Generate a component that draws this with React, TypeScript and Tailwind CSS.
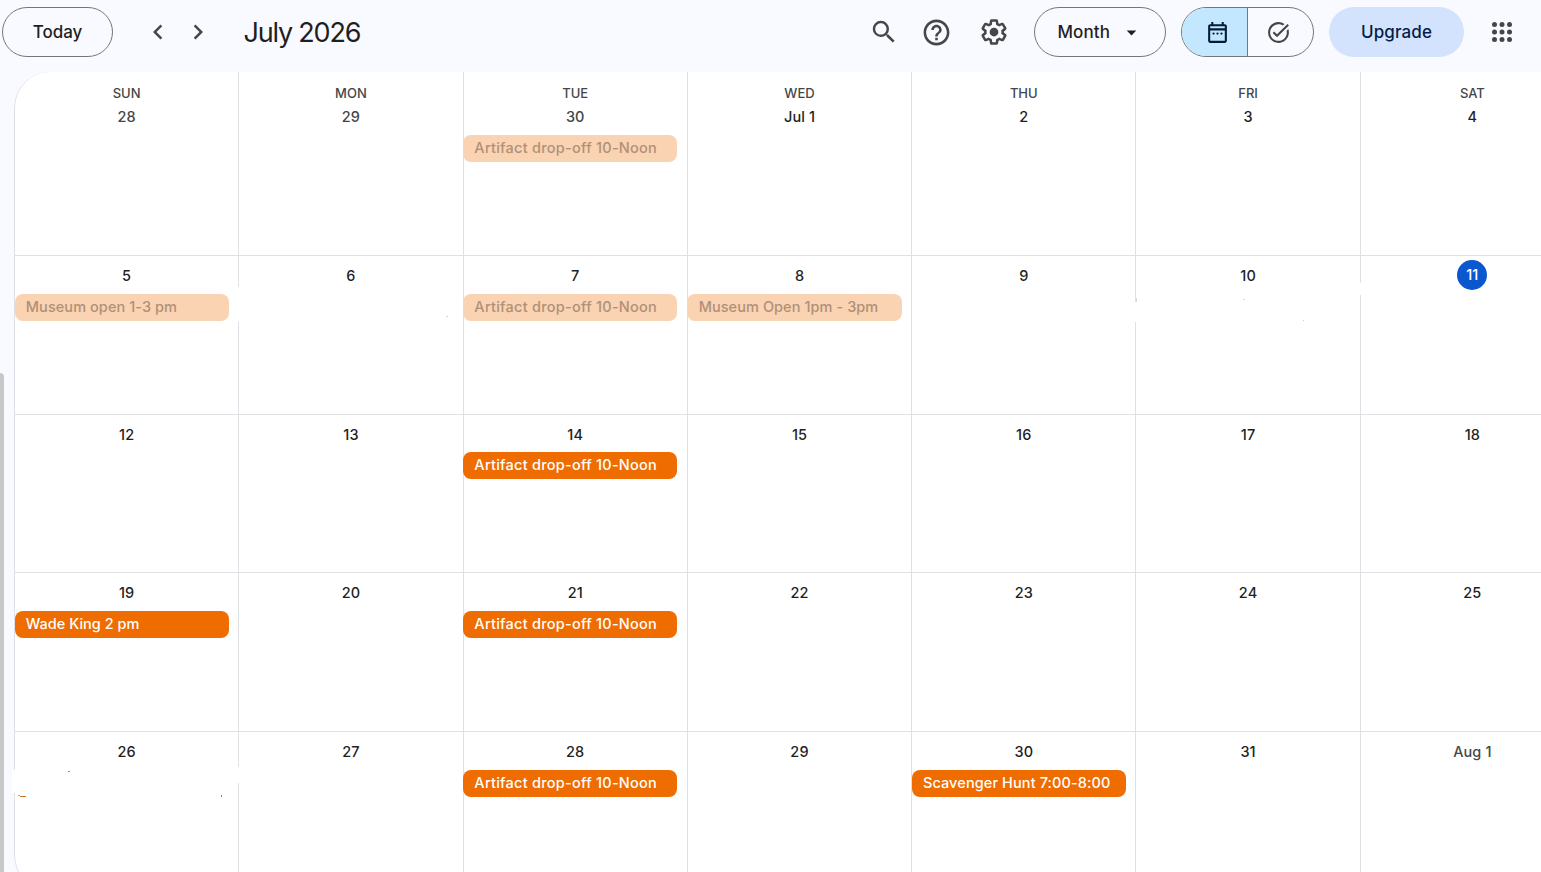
import clsx from 'clsx'
import { MdArrowDropDown, MdChevronLeft, MdChevronRight, MdHelpOutline, MdSearch, MdTaskAlt } from 'react-icons/md'

type CalendarEvent = { title: string; past?: boolean; tracking?: string }
type Day = { label: string; muted?: boolean; today?: boolean; event?: CalendarEvent }

const weekdays = ['SUN', 'MON', 'TUE', 'WED', 'THU', 'FRI', 'SAT']

const dropOff = { title: 'Artifact drop-off 10-Noon', tracking: 'tracking-[0.25px]' }

const days: Day[] = [
  { label: '28', muted: true },
  { label: '29', muted: true },
  { label: '30', muted: true, event: { ...dropOff, past: true } },
  { label: 'Jul 1' },
  { label: '2' },
  { label: '3' },
  { label: '4' },
  { label: '5', event: { title: 'Museum open 1-3 pm', past: true } },
  { label: '6' },
  { label: '7', event: { ...dropOff, past: true } },
  { label: '8', event: { title: 'Museum Open 1pm - 3pm', past: true } },
  { label: '9' },
  { label: '10' },
  { label: '11', today: true },
  { label: '12' },
  { label: '13' },
  { label: '14', event: dropOff },
  { label: '15' },
  { label: '16' },
  { label: '17' },
  { label: '18' },
  { label: '19', event: { title: 'Wade King 2 pm', tracking: 'tracking-[0.02px]' } },
  { label: '20' },
  { label: '21', event: dropOff },
  { label: '22' },
  { label: '23' },
  { label: '24' },
  { label: '25' },
  { label: '26' },
  { label: '27' },
  { label: '28', event: dropOff },
  { label: '29' },
  { label: '30', event: { title: 'Scavenger Hunt 7:00-8:00', tracking: 'tracking-[0.1px]' } },
  { label: '31' },
  { label: 'Aug 1', muted: true },
]

// Wiped spots and leftover specks lying over the grid
const marks = [
  'left-[238px] top-[287px] h-[35px] w-[2px] bg-white',
  'left-[1135px] top-[302px] h-[20px] w-[2px] bg-white',
  'left-[1360px] top-[283px] h-[12px] w-[2px] bg-white',
  'left-[12px] top-[770px] h-[23px] w-[4px] bg-white',
  'left-[238px] top-[767px] h-[16px] w-[2px] bg-white',
  'left-[446px] top-[316px] h-px w-[2px] bg-[#f3c9a8]',
  'left-[1136px] top-[298px] h-[4px] w-px bg-[#e6d5cf]',
  'left-[1243px] top-[299px] h-px w-[2px] bg-[#dcdcdc]',
  'left-[1303px] top-[320px] h-px w-px bg-[#cccccc]',
  'left-[68px] top-[771px] h-px w-[2px] bg-[#c08030]',
  'left-[18px] top-[795px] h-px w-[2px] bg-[#d99a5c]',
  'left-[20px] top-[796px] h-px w-[6px] bg-[#c9762a]',
  'left-[221px] top-[795px] h-[2px] w-px bg-[#b07a3c]',
]

function GearIcon() {
  return (
    <svg viewBox="0 0 24 24" className="size-[30px]" fill="currentColor">
      <path d="M13.85 22.25h-3.7c-.74 0-1.36-.54-1.45-1.27l-.27-1.89c-.27-.14-.53-.29-.79-.46l-1.8.72c-.7.26-1.47-.03-1.81-.65L2.2 15.53c-.35-.66-.2-1.44.36-1.88l1.53-1.19c-.01-.15-.02-.3-.02-.46 0-.15.01-.31.02-.46l-1.52-1.19c-.59-.45-.74-1.26-.37-1.88l1.85-3.19c.34-.62 1.11-.9 1.79-.63l1.81.73c.26-.17.52-.32.78-.46l.27-1.91c.09-.7.71-1.25 1.44-1.25h3.7c.74 0 1.36.54 1.45 1.27l.27 1.89c.27.14.53.29.79.46l1.8-.72c.71-.26 1.48.03 1.82.65l1.84 3.18c.36.66.2 1.44-.36 1.88l-1.52 1.19c.01.15.02.3.02.46s-.01.31-.02.46l1.52 1.19c.56.45.72 1.23.37 1.86l-1.86 3.22c-.34.62-1.11.9-1.8.63l-1.8-.72c-.26.17-.52.32-.78.46l-.27 1.91c-.1.68-.72 1.22-1.46 1.22zm-3.23-2h2.76l.37-2.55.53-.22c.44-.18.88-.44 1.34-.78l.45-.34 2.38.96 1.38-2.4-2.03-1.58.07-.56c.03-.26.06-.51.06-.78s-.03-.53-.06-.78l-.07-.56 2.03-1.58-1.39-2.4-2.39.96-.45-.35c-.42-.32-.87-.58-1.33-.77l-.52-.22-.37-2.55h-2.76l-.37 2.55-.53.21c-.44.19-.88.44-1.34.79l-.45.33-2.38-.95-1.39 2.39 2.03 1.58-.07.56a7 7 0 0 0-.06.79c0 .26.02.53.06.78l.07.56-2.03 1.58 1.38 2.4 2.39-.96.45.35c.43.33.86.58 1.33.77l.53.22.38 2.55z" />
      <circle cx="12" cy="12" r="3.5" />
    </svg>
  )
}

function CalendarIcon() {
  return (
    <svg viewBox="0 0 24 24" className="size-[25px]" fill="currentColor">
      <path d="M19 4h-1V2h-2v2H8V2H6v2H5c-1.1 0-2 .9-2 2v14c0 1.1.9 2 2 2h14c1.1 0 2-.9 2-2V6c0-1.1-.9-2-2-2zm0 16H5V10h14v10zm0-12H5V6h14v2z" />
      <circle cx="8.2" cy="13" r="1.1" />
      <circle cx="12" cy="13" r="1.1" />
      <circle cx="15.8" cy="13" r="1.1" />
    </svg>
  )
}

function AppsIcon() {
  return (
    <svg viewBox="0 0 24 24" className="size-[30px]" fill="currentColor">
      {[6, 12, 18].map(y => [6, 12, 18].map(x => <circle key={`${x}-${y}`} cx={x} cy={y} r="2" />))}
    </svg>
  )
}

function Header() {
  return (
    <header className="flex h-[72px] items-start justify-between pl-[2px] pr-[24px] pt-[7px] text-[#444746]">
      <div className="flex h-[50px] items-center">
        <button className="h-[50px] w-[111px] rounded-full border border-[#747775] pt-[2px] text-[17px] font-medium text-[#1f1f1f]">
          Today
        </button>
        <div className="ml-[30px] flex items-center gap-[10px]">
          <MdChevronLeft size={30} />
          <MdChevronRight size={30} />
        </div>
        <h1 className="ml-[30.5px] whitespace-nowrap pt-[2px] text-[27px] tracking-[-1.2px] text-[#1f1f1f]">July 2026</h1>
      </div>
      <div className="flex h-[50px] items-center">
        <MdSearch size={30} />
        <MdHelpOutline size={31} className="ml-[21.5px]" />
        <span className="ml-[27.5px]"><GearIcon /></span>
        <button className="ml-[25px] flex h-[50px] w-[132px] items-center rounded-full border border-[#747775] pl-[22.5px] text-[17px] font-medium text-[#1f1f1f]">
          <span className="pt-[2px] tracking-[0.1px]">Month</span>
          <MdArrowDropDown size={23} className="ml-[9.5px]" />
        </button>
        <div className="ml-[15px] flex h-[50px] w-[133px] overflow-hidden rounded-full border border-[#747775]">
          <span className="flex w-[66px] items-center justify-center border-r border-[#747775] bg-[#c2e7ff] pl-[5px] text-[#001d35]">
            <CalendarIcon />
          </span>
          <span className="flex flex-1 items-center justify-center pr-[4px]">
            <MdTaskAlt size={25} />
          </span>
        </div>
        <button className="ml-[15px] h-[50px] w-[135px] rounded-full bg-[#d3e3fd] pt-[2px] text-[17px] font-medium tracking-[0.1px] text-[#041e49]">
          Upgrade
        </button>
        <span className="ml-[23px]"><AppsIcon /></span>
      </div>
    </header>
  )
}

function DayCell({ day, weekday }: { day: Day; weekday?: string }) {
  return (
    <div className="min-w-0 border-b border-r border-[#dde1e6]">
      {weekday && (
        <div className="h-[25.6px] pt-[16px] text-center text-[13px] font-medium leading-[10px] text-[#444746]">{weekday}</div>
      )}
      <div className={clsx('flex h-[37.5px] items-center justify-center', weekday ? 'pt-px' : 'pt-[2px]')}>
        <span
          className={clsx(
            'text-[14.5px] font-medium tracking-[0.1px]',
            day.today && 'mt-[-1px] flex size-[30px] items-center justify-center rounded-full bg-[#0b57d0] text-white',
            day.muted ? 'text-[#444746]' : !day.today && 'text-[#1f1f1f]',
          )}
        >
          {day.label}
        </span>
      </div>
      {day.event && (
        <div
          className={clsx(
            'ml-[-0.5px] mr-[9.5px] flex h-[27.3px] items-center whitespace-nowrap rounded-lg pb-[1.3px] pl-[11.3px] text-[14.5px] font-medium',
            day.event.tracking ?? 'tracking-[0.07px]',
            day.event.past ? 'bg-[#fad3b2] text-[#b09078]' : 'bg-[#ef6c00] text-white',
          )}
        >
          {day.event.title}
        </div>
      )}
    </div>
  )
}

export default function App() {
  return (
    <div className="relative h-[872px] w-[1541px] overflow-hidden bg-[#f9faff] font-['Inter',sans-serif]">
      <Header />
      <main className="ml-[14px] w-[1571px] overflow-hidden rounded-l-[36px] border-l border-[#dde1e6] bg-white">
        <div className="grid grid-cols-7 grid-rows-[184px_158.7px_158.7px_158.7px_158.7px]">
          {days.map((day, i) => (
            <DayCell key={i} day={day} weekday={weekdays[i]} />
          ))}
        </div>
      </main>
      <div className="absolute left-0 top-[373px] h-[499px] w-[4px] rounded-tr-[4px] bg-[#c7c7c7]" />
      {marks.map(mark => (
        <div key={mark} className={clsx('absolute', mark)} />
      ))}
    </div>
  )
}
